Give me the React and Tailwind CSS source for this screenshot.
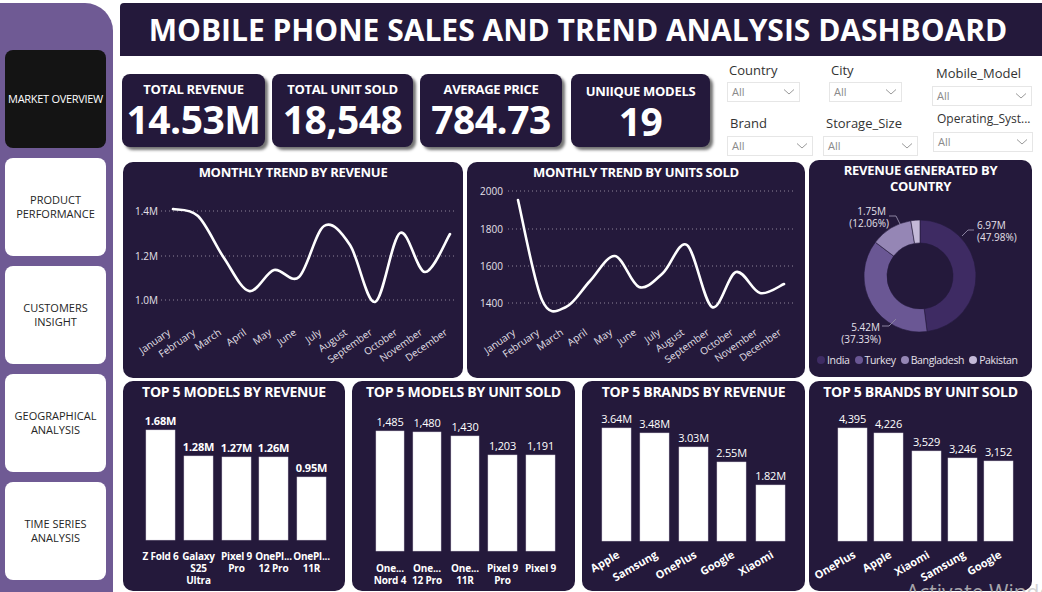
import React from "react";

const CARD = "bg-[#24193b]";

function smoothPath(pts) {
  let d = `M${pts[0][0]},${pts[0][1]}`;
  for (let i = 0; i < pts.length - 1; i++) {
    const p0 = pts[i - 1] || pts[i];
    const p1 = pts[i];
    const p2 = pts[i + 1];
    const p3 = pts[i + 2] || p2;
    const c1x = p1[0] + (p2[0] - p0[0]) / 6;
    const c1y = p1[1] + (p2[1] - p0[1]) / 6;
    const c2x = p2[0] - (p3[0] - p1[0]) / 6;
    const c2y = p2[1] - (p3[1] - p1[1]) / 6;
    d += ` C${c1x},${c1y} ${c2x},${c2y} ${p2[0]},${p2[1]}`;
  }
  return d;
}

const MONTHS = ["January","February","March","April","May","June","July","August","September","October","November","December"];

function Sidebar() {
  const items = ["PRODUCT\nPERFORMANCE", "CUSTOMERS\nINSIGHT", "GEOGRAPHICAL\nANALYSIS", "TIME SERIES\nANALYSIS"];
  return (
    <div className="mt-[3px] w-[113px] h-[589px] shrink-0 bg-[#6f5a94] rounded-tr-[28px] flex flex-col pt-[47px] pl-[5px] gap-[10px]">
      <div className="w-[101px] h-[98px] rounded-[8px] bg-[#141414] flex items-center justify-center text-white text-[11px] tracking-[-0.3px]">
        MARKET OVERVIEW
      </div>
      {items.map((t) => (
        <div key={t} className="w-[101px] h-[98px] rounded-[8px] bg-white flex items-center justify-center text-center text-[#252525] text-[11px] leading-[14px] whitespace-pre-line">
          {t}
        </div>
      ))}
    </div>
  );
}

function Kpi({ label, value, cls }) {
  return (
    <div className={`${CARD} h-[73px] rounded-[8px] shadow-[3px_3px_3px_rgba(0,0,0,0.55)] flex flex-col items-center ${cls}`}>
      <div className="text-white text-[13px] font-bold leading-[14px] tracking-[-0.3px]">{label}</div>
      <div className="mt-[3px] text-white text-[39px] font-bold leading-[40px] tracking-[-0.5px]">{value}</div>
    </div>
  );
}

function Chevron() {
  return (
    <svg width="12" height="8" viewBox="0 0 12 8" className="shrink-0">
      <polyline points="1,1.5 6,6 11,1.5" fill="none" stroke="#9a9a9a" strokeWidth="1" />
    </svg>
  );
}

function Filter({ label, cls, labelCls = "text-[13px] ml-[2px]", boxCls = "mt-[4px]" }) {
  return (
    <div className={`flex flex-col ${cls}`}>
      <div className={`text-[#333] leading-[16px] whitespace-nowrap ${labelCls}`}>{label}</div>
      <div className={`h-[20px] border border-[#e6e6e6] bg-white flex items-center justify-between px-[4px] ${boxCls}`}>
        <span className="text-[11px] text-[#8a8a8a]">All</span>
        <Chevron />
      </div>
    </div>
  );
}

function LineChart({ title, cls, ox, oy, w, h, grid, points, labelX, gridX1, gridX2 }) {
  const pts = points.map(([x, y]) => [x - ox, y - oy]);
  return (
    <div className={`${CARD} rounded-[10px] flex flex-col ${cls}`}>
      <div className="h-[20px] pt-[1px] flex items-center justify-center text-white text-[13px] font-bold tracking-[-0.3px]">{title}</div>
      <svg width={w} height={h}>
        {grid.map(([lab, y]) => (
          <g key={lab}>
            <line x1={gridX1 - ox} x2={gridX2 - ox} y1={y - oy} y2={y - oy} stroke="#8d8499" strokeWidth="1" strokeDasharray="1 3" />
            <text x={labelX - ox} y={y - oy + 3.5} fontSize="10" fill="#e4e0ea">{lab}</text>
          </g>
        ))}
        <path d={smoothPath(pts)} fill="none" stroke="#ffffff" strokeWidth="2.6" strokeLinecap="round" />
        {pts.map(([x], i) => (
          <text key={MONTHS[i]} x={x - 2} y={334 - oy} fontSize="10" fill="#e4e0ea" textAnchor="end" transform={`rotate(-35 ${x - 2} ${334 - oy})`}>{MONTHS[i]}</text>
        ))}
      </svg>
    </div>
  );
}

function arcPath(cx, cy, r0, r1, a0, a1) {
  const rad = (a) => ((a - 90) * Math.PI) / 180;
  const p = (r, a) => [cx + r * Math.cos(rad(a)), cy + r * Math.sin(rad(a))];
  const large = a1 - a0 > 180 ? 1 : 0;
  const [x0, y0] = p(r1, a0);
  const [x1, y1] = p(r1, a1);
  const [x2, y2] = p(r0, a1);
  const [x3, y3] = p(r0, a0);
  return `M${x0},${y0} A${r1},${r1} 0 ${large} 1 ${x1},${y1} L${x2},${y2} A${r0},${r0} 0 ${large} 0 ${x3},${y3} Z`;
}

function Donut() {
  const ox = 809, oy = 194;
  const cx = 920 - ox, cy = 276 - oy;
  const segs = [
    { v: 47.98, c: "#3e2b63" },
    { v: 37.33, c: "#6a5794" },
    { v: 12.06, c: "#9586b5" },
    { v: 2.63, c: "#c4b9d8" },
  ];
  let acc = 0;
  const legend = [
    { n: "India", dot: "bg-[#3e2b63]" },
    { n: "Turkey", dot: "bg-[#6a5794]" },
    { n: "Bangladesh", dot: "bg-[#9586b5]" },
    { n: "Pakistan", dot: "bg-[#c4b9d8]" },
  ];
  return (
    <div className={`${CARD} rounded-[10px] flex flex-col w-[223px] h-[217px]`}>
      <div className="pt-[2px] h-[34px] text-center text-white text-[13px] font-bold leading-[16px] tracking-[-0.3px]">
        REVENUE GENERATED BY<br />COUNTRY
      </div>
      <svg width="223" height="159">
        {segs.map((s) => {
          const a0 = (acc / 100) * 360;
          acc += s.v;
          const a1 = (acc / 100) * 360;
          return <path key={s.c} d={arcPath(cx, cy, 33, 56, a0, a1)} fill={s.c} stroke="#24193b" strokeWidth="0.6" />;
        })}
        <polyline points={`${962 - ox},${236 - oy} ${968 - ox},${230 - oy} ${974 - ox},${230 - oy}`} fill="none" stroke="#8a82a0" strokeWidth="1" />
        <text x={977 - ox} y={229 - oy} fontSize="10" fill="#e4e0ea">6.97M</text>
        <text x={977 - ox} y={241 - oy} fontSize="10" fill="#e4e0ea">(47.98%)</text>
        <polyline points={`${889 - ox},${216 - oy} ${896 - ox},${216 - oy} ${900 - ox},${224 - oy}`} fill="none" stroke="#8a82a0" strokeWidth="1" />
        <text x={886 - ox} y={215 - oy} fontSize="10" fill="#e4e0ea" textAnchor="end">1.75M</text>
        <text x={889 - ox} y={227 - oy} fontSize="10" fill="#e4e0ea" textAnchor="end">(12.06%)</text>
        <polyline points={`${882 - ox},${326 - oy} ${889 - ox},${326 - oy} ${896 - ox},${319 - oy}`} fill="none" stroke="#8a82a0" strokeWidth="1" />
        <text x={880 - ox} y={331 - oy} fontSize="10" fill="#e4e0ea" textAnchor="end">5.42M</text>
        <text x={881 - ox} y={343 - oy} fontSize="10" fill="#e4e0ea" textAnchor="end">(37.33%)</text>
      </svg>
      <div className="flex items-center pl-[8px] gap-[5px] h-[14px]">
        {legend.map((l) => (
          <div key={l.n} className="flex items-center gap-[2px]">
            <span className={`w-[8px] h-[8px] rounded-full ${l.dot}`} />
            <span className="text-[10.5px] leading-[14px] text-[#e4e0ea] tracking-[-0.35px]">{l.n}</span>
          </div>
        ))}
      </div>
    </div>
  );
}

function BarChart({ title, cls, ox, w, bars, bottom, boldValues, rotated, labelY = 556 }) {
  const oy = 401;
  return (
    <div className={`${CARD} rounded-[10px] flex flex-col h-[210px] ${cls}`}>
      <div className="h-[20px] pt-[1px] flex items-center justify-center text-white text-[14px] font-bold tracking-[-0.3px] whitespace-nowrap">{title}</div>
      <svg width={w} height="190">
        {bars.map((b) => {
          const cx = (b.x1 + b.x2) / 2 - ox;
          return (
            <g key={b.label}>
              <rect x={b.x1 - ox} y={b.top - oy} width={b.x2 - b.x1} height={bottom - b.top} fill="#ffffff" stroke="#d8d4e0" strokeWidth="0.5" />
              <text x={cx} y={b.top - oy - 5} fontSize="11" fill="#ffffff" textAnchor="middle" fontWeight={boldValues ? 700 : 400} letterSpacing="-0.2">{b.value}</text>
              {rotated ? (
                <text x={cx + 4} y={557 - oy} fontSize="11" fontWeight="700" fill="#ffffff" textAnchor="end" transform={`rotate(-30 ${cx + 4} ${557 - oy})`}>{b.label}</text>
              ) : (
                b.label.split("\n").map((ln, i) => (
                  <text key={i} x={cx} y={labelY - oy + 3.5 + i * 12} fontSize="10" fontWeight="700" fill="#ffffff" textAnchor="middle" letterSpacing="-0.2">{ln}</text>
                ))
              )}
            </g>
          );
        })}
      </svg>
    </div>
  );
}

export default function App() {
  const revPts = [[173,209],[198,216],[224,258],[249,291],[274,270],[299,277],[324,226],[350,245],[375,302],[400,233],[425,272],[450,234]];
  const unitPts = [[518,200],[542,300],[566,307],[590,281],[615,256],[639,287],[663,273],[687,245],[712,307],[736,272],[760,293],[784,284]];
  return (
    <div className="w-[1042px] h-[592px] bg-white flex overflow-hidden relative font-['Open_Sans','Noto_Sans',sans-serif]">
      <Sidebar />
      <div className="ml-[7px] w-[922px] flex flex-col">
        <div className={`mt-[3px] h-[53px] ${CARD} rounded-tl-[4px] flex items-center justify-center pr-[6px]`}>
          <span className="text-white text-[30px] font-bold whitespace-nowrap">MOBILE PHONE SALES AND TREND ANALYSIS DASHBOARD</span>
        </div>
        <div className="h-[104px] flex">
          <div className="flex pt-[18px] pl-[2px]">
            <Kpi label="TOTAL REVENUE" value="14.53M" cls="w-[143px] pt-[8px]" />
            <Kpi label="TOTAL UNIT SOLD" value="18,548" cls="w-[141px] ml-[7px] pt-[8px]" />
            <Kpi label="AVERAGE PRICE" value="784.73" cls="w-[142px] ml-[7px] pt-[8px]" />
            <Kpi label="UNIIQUE MODELS" value="19" cls="w-[139px] ml-[9px] pt-[10px]" />
          </div>
          <div className="ml-[17px] flex flex-col pt-[6px]">
            <div className="flex">
              <Filter label="Country" cls="w-[73px]" />
              <Filter label="City" cls="w-[73px] ml-[29px]" />
              <Filter label="Mobile_Model" cls="w-[100px] ml-[30px] mt-[3px]" labelCls="text-[13px] ml-[4px]" boxCls="mt-[5px]" />
            </div>
            <div className="flex mt-[9px]">
              <Filter label="Brand" cls="w-[86px]" labelCls="text-[13px] ml-[3px]" boxCls="mt-[5px]" />
              <Filter label="Storage_Size" cls="w-[95px] ml-[10px]" labelCls="text-[13px] ml-[3px]" boxCls="mt-[5px]" />
              <Filter label="Operating_Syst..." cls="w-[100px] ml-[15px] -mt-[4px]" labelCls="text-[12px] ml-[4px]" boxCls="mt-[5px]" />
            </div>
          </div>
        </div>
        <div className="flex items-start pl-[3px] h-[218px]">
          <LineChart title="MONTHLY TREND BY REVENUE" cls="w-[340px] h-[216px] mt-[2px]" ox={123} oy={182} w={340} h={196}
            grid={[["1.4M",211],["1.2M",256],["1.0M",300]]} points={revPts} labelX={135} gridX1={161} gridX2={455} />
          <LineChart title="MONTHLY TREND BY UNITS SOLD" cls="w-[338px] h-[216px] mt-[2px] ml-[4px]" ox={467} oy={182} w={338} h={196}
            grid={[["2000",191],["1800",229],["1600",266],["1400",303]]} points={unitPts} labelX={480} gridX1={508} gridX2={793} />
          <div className="ml-[4px]">
            <Donut />
          </div>
        </div>
        <div className="flex pl-[3px] mt-[3px]">
          <BarChart title="TOP 5 MODELS BY REVENUE" cls="w-[222px]" ox={123} w={222} bottom={540} boldValues
            bars={[
              { x1: 146, x2: 175, top: 430, value: "1.68M", label: "Z Fold 6" },
              { x1: 184, x2: 213, top: 456, value: "1.28M", label: "Galaxy\nS25\nUltra" },
              { x1: 222, x2: 251, top: 457, value: "1.27M", label: "Pixel 9\nPro" },
              { x1: 259, x2: 288, top: 457, value: "1.26M", label: "OnePl...\n12 Pro" },
              { x1: 297, x2: 326, top: 477, value: "0.95M", label: "OnePl...\n11R" },
            ]} />
          <BarChart title="TOP 5 MODELS BY UNIT SOLD" cls="w-[223px] ml-[7px]" ox={352} w={223} bottom={551} labelY={568}
            bars={[
              { x1: 376, x2: 404, top: 431, value: "1,485", label: "One...\nNord 4" },
              { x1: 413, x2: 441, top: 432, value: "1,480", label: "One...\n12 Pro" },
              { x1: 451, x2: 479, top: 436, value: "1,430", label: "One...\n11R" },
              { x1: 488, x2: 517, top: 455, value: "1,203", label: "Pixel 9\nPro" },
              { x1: 526, x2: 555, top: 455, value: "1,191", label: "Pixel 9" },
            ]} />
          <BarChart title="TOP 5 BRANDS BY REVENUE" cls="w-[223px] ml-[7px]" ox={582} w={223} bottom={541} rotated
            bars={[
              { x1: 602, x2: 631, top: 428, value: "3.64M", label: "Apple" },
              { x1: 640, x2: 669, top: 433, value: "3.48M", label: "Samsung" },
              { x1: 679, x2: 708, top: 447, value: "3.03M", label: "OnePlus" },
              { x1: 717, x2: 746, top: 462, value: "2.55M", label: "Google" },
              { x1: 756, x2: 785, top: 485, value: "1.82M", label: "Xiaomi" },
            ]} />
          <BarChart title="TOP 5 BRANDS BY UNIT SOLD" cls="w-[223px] ml-[4px]" ox={809} w={223} bottom={541} rotated
            bars={[
              { x1: 838, x2: 867, top: 428, value: "4,395", label: "OnePlus" },
              { x1: 874, x2: 903, top: 433, value: "4,226", label: "Apple" },
              { x1: 912, x2: 941, top: 451, value: "3,529", label: "Xiaomi" },
              { x1: 948, x2: 977, top: 458, value: "3,246", label: "Samsung" },
              { x1: 984, x2: 1013, top: 461, value: "3,152", label: "Google" },
            ]} />
        </div>
      </div>
      <span className="absolute left-[906px] top-[577px] text-[21px] text-[#c8c8c8] opacity-80 whitespace-nowrap pointer-events-none">Activate Windows</span>
    </div>
  );
}
